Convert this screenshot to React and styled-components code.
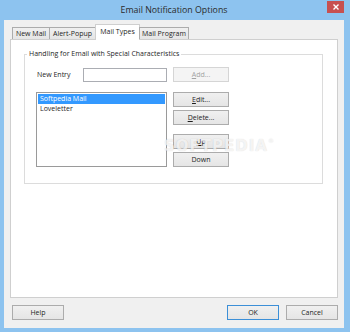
import React from "react";
import styled, { createGlobalStyle } from "styled-components";

const GlobalStyle = createGlobalStyle`
  html, body {
    margin: 0;
    padding: 0;
    background: #ffffff;
  }
  body {
    font-family: "Open Sans", "Noto Sans", sans-serif;
  }
`;

const Window = styled.div`
  position: relative;
  width: 350px;
  height: 332px;
  box-sizing: border-box;
  padding: 0 6px 4px 4px;
  background: #8dc3ef;
  display: flex;
  flex-direction: column;
  overflow: hidden;
`;

const TitleBar = styled.div`
  height: 20px;
  flex: none;
  display: flex;
  align-items: center;
  justify-content: center;
`;

const Title = styled.span`
  font-size: 8.8px;
  color: #2b2b2b;
  line-height: 12px;
`;

const CloseButton = styled.div`
  position: absolute;
  top: 1px;
  right: 6px;
  width: 17px;
  height: 12px;
  background: #c75050;
  display: flex;
  align-items: center;
  justify-content: center;
`;

const Dialog = styled.div`
  flex: 1;
  min-height: 0;
  background: #f0f0f0;
  box-sizing: border-box;
  padding: 4px 6px 8px 6px;
  display: flex;
  flex-direction: column;
`;

const TabStrip = styled.div`
  height: 16px;
  flex: none;
  display: flex;
  align-items: flex-end;
  padding-left: 2px;
  margin-bottom: -1px;
  position: relative;
  z-index: 1;
`;

const Tab = styled.div`
  box-sizing: border-box;
  width: ${(p) => p.$width}px;
  height: ${(p) => (p.$active ? 16 : 12)}px;
  margin-bottom: ${(p) => (p.$active ? 0 : 1)}px;
  margin-right: -1px;
  border: 1px solid ${(p) => (p.$active ? "#cfcfcf" : "#acacac")};
  border-bottom: none;
  background: ${(p) =>
    p.$active ? "#ffffff" : "linear-gradient(#f0f0f0, #e5e5e5)"};
  display: flex;
  align-items: center;
  justify-content: center;
  padding-bottom: ${(p) => (p.$active ? 3 : 0)}px;
  font-size: 7px;
  color: #1e1e1e;
  white-space: nowrap;
`;

const TabPanel = styled.div`
  flex: 1;
  min-height: 0;
  box-sizing: border-box;
  background: #ffffff;
  border: 1px solid #cfcfcf;
  position: relative;
  z-index: 0;
  padding: 9px 14px 0 13px;
`;

const GroupBox = styled.fieldset`
  margin: 0;
  padding: 0;
  min-width: 0;
  border: 1px solid #dcdcdc;
`;

const Legend = styled.legend`
  margin-left: 2px;
  padding: 0 2px;
  font-size: 7px;
  line-height: 10px;
  color: #1e1e1e;
`;

const EntryGrid = styled.div`
  display: grid;
  grid-template-columns: 131px 56px;
  column-gap: 6px;
  row-gap: 10px;
  padding: 8px 0 16px 11px;
`;

const EntryField = styled.div`
  display: flex;
  align-items: center;
`;

const FieldLabel = styled.span`
  width: 47px;
  box-sizing: border-box;
  padding-left: 1px;
  font-size: 7px;
  color: #1e1e1e;
`;

const TextInput = styled.div`
  box-sizing: border-box;
  width: 84px;
  height: 14px;
  border: 1px solid #abadb3;
  background: #ffffff;
`;

const ListBox = styled.div`
  box-sizing: border-box;
  height: 75px;
  border: 1px solid #9a9a9a;
  background: #ffffff;
  padding: 1px;
`;

const ListItem = styled.div`
  height: 10px;
  line-height: 10px;
  padding-left: 2px;
  font-size: 7px;
  color: ${(p) => (p.$selected ? "#ffffff" : "#1e1e1e")};
  background: ${(p) => (p.$selected ? "#3399ff" : "transparent")};
  white-space: nowrap;
`;

const ButtonColumn = styled.div`
  display: flex;
  flex-direction: column;
  gap: 3px;
`;

const Button = styled.div`
  box-sizing: border-box;
  width: ${(p) => p.$width || 56}px;
  height: 15px;
  flex: none;
  margin-top: ${(p) => p.$gapBefore || 0}px;
  margin-left: ${(p) => (p.$pushRight ? "auto" : "0")};
  border: 1px solid
    ${(p) => (p.$primary ? "#3c8fd7" : p.$disabled ? "#d5d5d5" : "#acacac")};
  background: ${(p) =>
    p.$disabled ? "#f4f4f4" : "linear-gradient(#f0f0f0, #e5e5e5)"};
  color: ${(p) => (p.$disabled ? "#a3a3a3" : "#1e1e1e")};
  font-size: 7px;
  display: flex;
  align-items: center;
  justify-content: center;
  white-space: nowrap;

  u {
    text-decoration-thickness: 1px;
    text-underline-offset: 1px;
  }
`;

const Footer = styled.div`
  flex: none;
  display: flex;
  gap: 7px;
  margin-top: 7px;
  padding-left: 2px;
`;

const Watermark = styled.div`
  position: absolute;
  left: 164px;
  top: 137px;
  font-family: "DejaVu Sans", sans-serif;
  font-weight: bold;
  font-size: 15px;
  letter-spacing: 1px;
  color: rgba(255, 255, 255, 0.75);
  text-shadow: 0 0 1px rgba(0, 0, 0, 0.18);
  pointer-events: none;

  sup {
    font-size: 6px;
    font-weight: normal;
    vertical-align: 8px;
  }
`;

const tabs = [
  { label: "New Mail", width: 38 },
  { label: "Alert-Popup", width: 47 },
  { label: "Mail Types", width: 45, active: true },
  { label: "Mail Program", width: 50 },
];

const entries = ["Softpedia Mail", "Loveletter"];

export default function App() {
  return (
    <>
      <GlobalStyle />
      <Window>
        <TitleBar>
          <Title>Email Notification Options</Title>
        </TitleBar>
        <CloseButton>
          <svg width="6" height="6" viewBox="0 0 6 6">
            <path
              d="M0.5 0.5 L5.5 5.5 M5.5 0.5 L0.5 5.5"
              stroke="#ffffff"
              strokeWidth="1.4"
            />
          </svg>
        </CloseButton>
        <Dialog>
          <TabStrip>
            {tabs.map((t) => (
              <Tab key={t.label} $width={t.width} $active={t.active}>
                {t.label}
              </Tab>
            ))}
          </TabStrip>
          <TabPanel>
            <GroupBox>
              <Legend>Handling for Email with Special Characteristics</Legend>
              <EntryGrid>
                <EntryField>
                  <FieldLabel>New Entry</FieldLabel>
                  <TextInput />
                </EntryField>
                <Button $disabled>
                  <u>A</u>dd...
                </Button>
                <ListBox>
                  {entries.map((e, i) => (
                    <ListItem key={e} $selected={i === 0}>
                      {e}
                    </ListItem>
                  ))}
                </ListBox>
                <ButtonColumn>
                  <Button>
                    <u>E</u>dit...
                  </Button>
                  <Button>
                    <u>D</u>elete...
                  </Button>
                  <Button $gapBefore={6}>
                    <u>U</u>p
                  </Button>
                  <Button>Down</Button>
                </ButtonColumn>
              </EntryGrid>
            </GroupBox>
          </TabPanel>
          <Footer>
            <Button $width={52}>Help</Button>
            <Button $width={52} $primary $pushRight>
              OK
            </Button>
            <Button $width={52}>Cancel</Button>
          </Footer>
        </Dialog>
        <Watermark>
          SOFTPEDIA<sup>®</sup>
        </Watermark>
      </Window>
    </>
  );
}
